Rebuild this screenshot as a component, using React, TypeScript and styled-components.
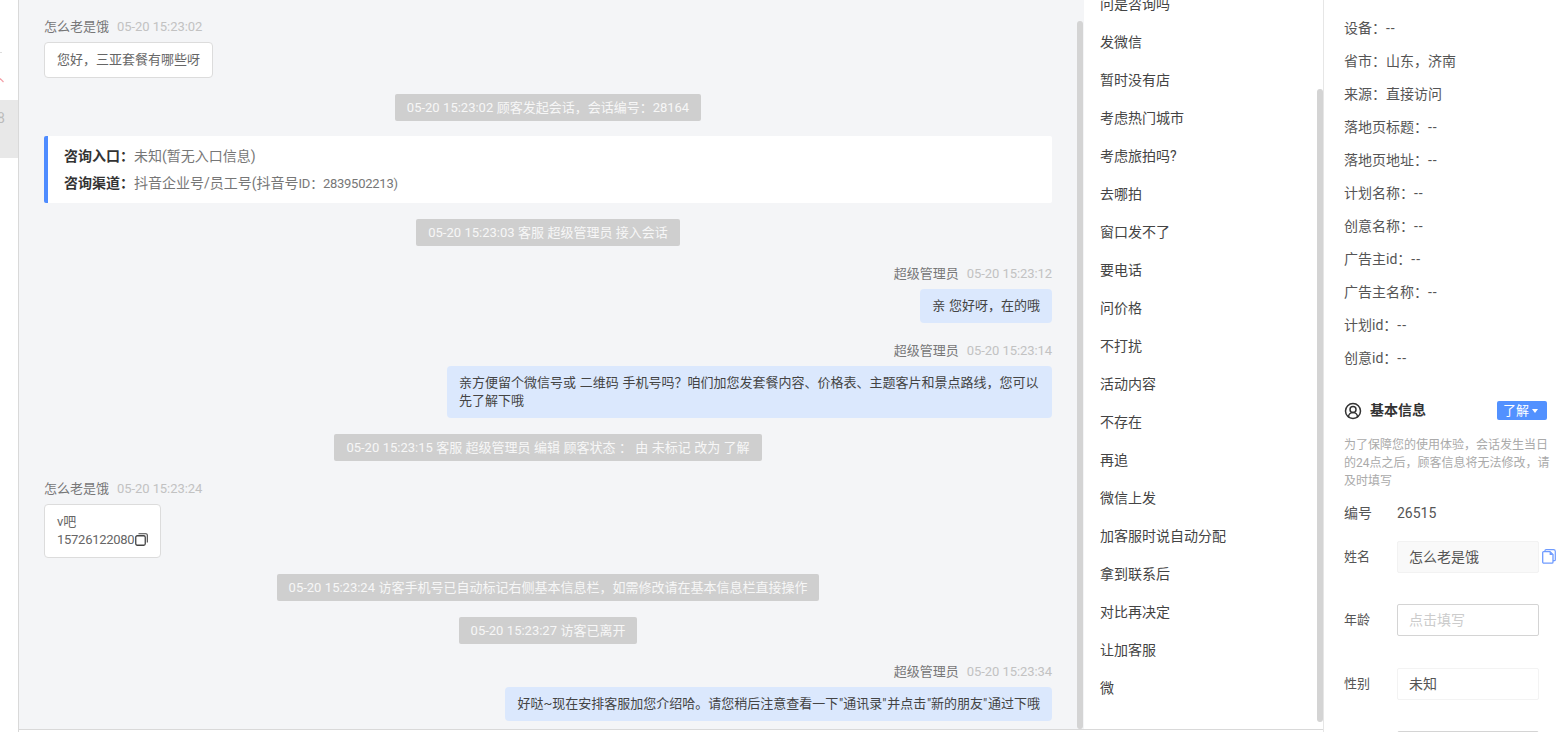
import React from "react";
import styled, { createGlobalStyle } from "styled-components";
import { CircleUserRound } from "lucide-react";

const GlobalStyle = createGlobalStyle`
  html, body {
    margin: 0;
    padding: 0;
    background: #fff;
    overflow: hidden;
  }
  * {
    box-sizing: border-box;
  }
  body {
    font-family: Roboto, "Noto Sans CJK SC", sans-serif;
    font-size: 13px;
    line-height: 18px;
    color: #555;
  }
`;

const quickReplies = [
  "问是咨询吗",
  "发微信",
  "暂时没有店",
  "考虑热门城市",
  "考虑旅拍吗?",
  "去哪拍",
  "窗口发不了",
  "要电话",
  "问价格",
  "不打扰",
  "活动内容",
  "不存在",
  "再追",
  "微信上发",
  "加客服时说自动分配",
  "拿到联系后",
  "对比再决定",
  "让加客服",
  "微",
];

const visitInfo = [
  { label: "设备", value: "--" },
  { label: "省市", value: "山东，济南" },
  { label: "来源", value: "直接访问" },
  { label: "落地页标题", value: "--" },
  { label: "落地页地址", value: "--" },
  { label: "计划名称", value: "--" },
  { label: "创意名称", value: "--" },
  { label: "广告主id", value: "--" },
  { label: "广告主名称", value: "--" },
  { label: "计划id", value: "--" },
  { label: "创意id", value: "--" },
];

const CopyIcon = () => (
  <CopyGlyph width="13" height="13" viewBox="0 0 13 13" fill="none">
    <rect x="0.75" y="2.75" width="9.5" height="9.5" rx="1.5" stroke="#444" strokeWidth="1.3" />
    <path d="M3.5 0.7H11a1.3 1.3 0 0 1 1.3 1.3V9.5" stroke="#444" strokeWidth="1.1" />
  </CopyGlyph>
);

const PageCopyIcon = () => (
  <svg width="14" height="15" viewBox="0 0 14 15" fill="none">
    <path d="M3 2.2V1.6C3 1 3.4 .7 4 .7h7.5c1 0 1.8.8 1.8 1.8v8.2c0 .6-.3 1-.9 1H11" stroke="#6f9bff" strokeWidth="1.2" />
    <path d="M1.6 2.6H8l3 3v7.4c0 .7-.4 1.2-1.1 1.2H1.9c-.7 0-1.2-.5-1.2-1.2V3.5c0-.5.4-.9.9-.9z" fill="#fff" stroke="#6f9bff" strokeWidth="1.3" />
    <path d="M7.6 2.6l3.4 3.4H7.6z" fill="#6f9bff" />
  </svg>
);

const App = () => {
  return (
    <>
      <GlobalStyle />
      <Page>
        <Sidebar>
          <SideDash />
          <SideMark>
            <svg width="4" height="6" viewBox="0 0 4 6" fill="none">
              <path d="M0 1.5L3.5 5" stroke="#f4a0a8" strokeWidth="1.2" />
            </svg>
          </SideMark>
          <SideActive>
            <SideCount>8</SideCount>
          </SideActive>
        </Sidebar>
        <Center>
          <CenterRow>
            <ChatPane>
              <MessageGroup>
                <MetaLine>
                  <Name>怎么老是饿</Name>
                  <Time>05-20 15:23:02</Time>
                </MetaLine>
                <Bubble>您好，三亚套餐有哪些呀</Bubble>
              </MessageGroup>
              <Notice>05-20 15:23:02 顾客发起会话，会话编号：28164</Notice>
              <InfoCard>
                <InfoLine>
                  <b>咨询入口：</b>未知(暂无入口信息)
                </InfoLine>
                <InfoLine>
                  <b>咨询渠道：</b>抖音企业号/员工号(抖音号<Digits>ID：2839502213)</Digits>
                </InfoLine>
              </InfoCard>
              <Notice>05-20 15:23:03 客服 超级管理员 接入会话</Notice>
              <MessageGroup $mine>
                <MetaLine>
                  <Name>超级管理员</Name>
                  <Time>05-20 15:23:12</Time>
                </MetaLine>
                <Bubble $mine>亲 您好呀，在的哦</Bubble>
              </MessageGroup>
              <MessageGroup $mine>
                <MetaLine>
                  <Name>超级管理员</Name>
                  <Time>05-20 15:23:14</Time>
                </MetaLine>
                <Bubble $mine>
                  亲方便留个微信号或 二维码 手机号吗？咱们加您发套餐内容、价格表、主题客片和景点路线，您可以先了解下哦
                </Bubble>
              </MessageGroup>
              <Notice>05-20 15:23:15 客服 超级管理员 编辑 顾客状态 ： 由 未标记 改为 了解</Notice>
              <MessageGroup>
                <MetaLine>
                  <Name>怎么老是饿</Name>
                  <Time>05-20 15:23:24</Time>
                </MetaLine>
                <Bubble>
                  v吧
                  <br />
                  <Phone>15726122080</Phone>
                  <CopyIcon />
                </Bubble>
              </MessageGroup>
              <Notice>05-20 15:23:24 访客手机号已自动标记右侧基本信息栏，如需修改请在基本信息栏直接操作</Notice>
              <Notice>05-20 15:23:27 访客已离开</Notice>
              <MessageGroup $mine>
                <MetaLine>
                  <Name>超级管理员</Name>
                  <Time>05-20 15:23:34</Time>
                </MetaLine>
                <Bubble $mine>
                  好哒~现在安排客服加您介绍哈。请您稍后注意查看一下<Quoted>"通讯录"</Quoted>并点击<Quoted>"新的朋友"</Quoted>通过下哦
                </Bubble>
              </MessageGroup>
              <ChatThumb />
            </ChatPane>
            <QuickPane>
              <QuickList>
                {quickReplies.map((text) => (
                  <QuickItem key={text}>{text}</QuickItem>
                ))}
              </QuickList>
              <QuickThumb />
            </QuickPane>
          </CenterRow>
          <CenterFoot />
        </Center>
        <RightPanel>
          <VisitList>
            {visitInfo.map((row) => (
              <VisitRow key={row.label}>
                {row.label}：<VisitValue $empty={row.value === "--"}>{row.value}</VisitValue>
              </VisitRow>
            ))}
          </VisitList>
          <SectionHead>
            <CircleUserRound size={18} strokeWidth={2} color="#333" />
            <SectionTitle>基本信息</SectionTitle>
            <StatusTag>
              了解
              <Caret />
            </StatusTag>
          </SectionHead>
          <Note>为了保障您的使用体验，会话发生当日的24点之后，顾客信息将无法修改，请及时填写</Note>
          <PlainRow>
            <PlainLabel>编号</PlainLabel>
            <span>26515</span>
          </PlainRow>
          <FormRow>
            <FieldLabel>姓名</FieldLabel>
            <FieldBox $variant="filled">怎么老是饿</FieldBox>
            <CopyButton>
              <PageCopyIcon />
            </CopyButton>
          </FormRow>
          <FormRow>
            <FieldLabel>年龄</FieldLabel>
            <FieldBox $variant="empty">点击填写</FieldBox>
          </FormRow>
          <FormRow>
            <FieldLabel>性别</FieldLabel>
            <FieldBox $variant="select">未知</FieldBox>
          </FormRow>
          <FormRow>
            <FieldLabel />
            <FieldBox $variant="empty" />
          </FormRow>
        </RightPanel>
      </Page>
    </>
  );
};

const Page = styled.div`
  display: flex;
  width: 1556px;
  height: 732px;
  overflow: hidden;
  background: #fff;
`;

const Sidebar = styled.div`
  flex: none;
  width: 19px;
  padding-top: 52px;
  border-right: 1px solid #d9d9d9;
  display: flex;
  flex-direction: column;
  overflow: hidden;
`;

const SideDash = styled.div`
  width: 2px;
  height: 1px;
  background: #ddd;
`;

const SideMark = styled.div`
  height: 47px;
  padding-top: 24px;
  line-height: 0;
`;

const SideActive = styled.div`
  height: 58px;
  background: #e8e8e8;
  overflow: hidden;
`;

const SideCount = styled.div`
  margin: 9px 0 0 -3px;
  color: #bbb;
  font-size: 14px;
`;

const Center = styled.div`
  flex: none;
  width: 1304px;
  display: flex;
  flex-direction: column;
`;

const CenterRow = styled.div`
  height: 729px;
  display: flex;
`;

const CenterFoot = styled.div`
  height: 3px;
  border-top: 1px solid #d9d9d9;
`;

const ChatPane = styled.div`
  position: relative;
  flex: none;
  width: 1065px;
  padding: 15px 32px 0 25px;
  background: #f4f5f7;
  display: flex;
  flex-direction: column;
  gap: 16px;
  overflow: hidden;
`;

const ChatThumb = styled.div`
  position: absolute;
  top: 21px;
  right: 1px;
  bottom: 0;
  width: 6px;
  border-radius: 3px;
  background: #d4d4d4;
`;

const MessageGroup = styled.div<{ $mine?: boolean }>`
  padding-top: 3px;
  display: flex;
  flex-direction: column;
  align-items: ${(p) => (p.$mine ? "flex-end" : "flex-start")};
`;

const MetaLine = styled.div`
  height: 18px;
  margin-bottom: 6px;
  display: flex;
  gap: 8px;
`;

const Name = styled.span`
  color: #777;
`;

const Time = styled.span`
  color: #c2c2c2;
  letter-spacing: -0.07px;
`;

const Bubble = styled.div<{ $mine?: boolean }>`
  max-width: 605px;
  padding: 8px 12px;
  border: ${(p) => (p.$mine ? "0" : "1px solid #dcdcdc")};
  border-radius: 4px;
  background: ${(p) => (p.$mine ? "#dbe8fd" : "#fff")};
  color: ${(p) => (p.$mine ? "#444" : "#666")};
  word-spacing: 0.5px;
`;

const Phone = styled.span`
  letter-spacing: -0.27px;
`;

const CopyGlyph = styled.svg`
  margin-left: 1px;
  vertical-align: -2px;
`;

const Quoted = styled.span`
  padding: 0 0.75px;
`;

const Notice = styled.div`
  align-self: center;
  height: 27px;
  padding: 0 12px;
  border-radius: 2px;
  background: #cfcfcf;
  color: #f7f7f7;
  line-height: 27px;
  white-space: nowrap;
  word-spacing: 0.2px;
`;

const InfoCard = styled.div`
  margin-top: -1px;
  height: 67px;
  padding: 7px 16px 0;
  border-left: 4px solid #4f8cff;
  border-radius: 2px;
  background: #fff;
  color: #777;
  font-size: 14px;
`;

const InfoLine = styled.div`
  height: 27px;
  line-height: 27px;

  b {
    color: #333;
    font-weight: 700;
  }
`;

const Digits = styled.span`
  font-size: 13px;
  letter-spacing: -0.25px;
`;

const QuickPane = styled.div`
  position: relative;
  flex: none;
  width: 239px;
  background: #fff;
  overflow: hidden;
`;

const QuickList = styled.div`
  margin-top: -15px;
  padding-left: 16px;
`;

const QuickItem = styled.div`
  height: 38px;
  line-height: 38px;
  color: #444;
  font-size: 14px;
`;

const QuickThumb = styled.div`
  position: absolute;
  top: 89px;
  right: 0;
  height: 633px;
  width: 6px;
  border-radius: 3px;
  background: #d4d4d4;
`;

const RightPanel = styled.div`
  flex: none;
  width: 233px;
  padding: 12px 6px 0 20px;
  border-left: 1px solid #e6e6e6;
  overflow: hidden;
  height: 732px;
`;

const VisitList = styled.div`
  display: flex;
  flex-direction: column;
`;

const VisitRow = styled.div`
  height: 33px;
  line-height: 33px;
  color: #555;
  font-size: 14px;
`;

const VisitValue = styled.span<{ $empty: boolean }>`
  letter-spacing: ${(p) => (p.$empty ? "1px" : "0")};
`;

const SectionHead = styled.div`
  margin: 26px 3px 0 0;
  height: 19px;
  display: flex;
  align-items: center;
`;

const SectionTitle = styled.div`
  margin: 0 0 2px 8px;
  flex: 1;
  color: #333;
  font-size: 14px;
  font-weight: 700;
`;

const StatusTag = styled.div`
  width: 50px;
  height: 19px;
  padding-left: 6px;
  border-radius: 2px;
  background: #5291ff;
  color: #fff;
  line-height: 19px;
  display: flex;
  align-items: center;
  gap: 3px;
`;

const Caret = styled.i`
  width: 0;
  height: 0;
  border-left: 3.5px solid transparent;
  border-right: 3.5px solid transparent;
  border-top: 4px solid #fff;
`;

const Note = styled.div`
  margin-top: 16px;
  width: 206px;
  color: #aaa;
  font-size: 12px;
  line-height: 18px;
`;

const PlainRow = styled.div`
  margin-top: 14px;
  height: 18px;
  display: flex;
  font-size: 14px;
`;

const FormRow = styled.div`
  margin-top: 18.75px;
  height: 32px;
  display: flex;
  align-items: center;

  & + & {
    margin-top: 31.5px;
  }
`;

const FieldLabel = styled.span`
  flex: none;
  width: 53px;
  color: #555;
`;

const PlainLabel = styled(FieldLabel)`
  font-size: 14px;
`;

const boxStyles = {
  filled: "background: #f9f9f9; border-color: #f2f2f2; color: #555;",
  empty: "background: #fff; border-color: #d4d4d4; color: #ccc;",
  select: "background: #fff; border-color: #f3f3f3; color: #555;",
};

const FieldBox = styled.div<{ $variant: keyof typeof boxStyles }>`
  flex: none;
  width: 142px;
  height: 32px;
  padding: 0 11px;
  border: 1px solid;
  border-radius: 2px;
  font-size: 14px;
  line-height: 30px;
  ${(p) => boxStyles[p.$variant]}
`;

const CopyButton = styled.div`
  margin-left: 3px;
  height: 15px;
  line-height: 0;
`;

export default App;
